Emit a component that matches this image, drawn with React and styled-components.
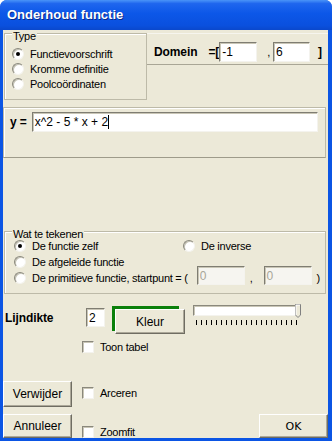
import styled, { createGlobalStyle } from "styled-components";

const GlobalStyle = createGlobalStyle`
  html, body {
    margin: 0;
    padding: 0;
    background: #ffffff;
  }
  body {
    font-family: "Liberation Sans", Arial, sans-serif;
  }
`;

const App = () => {
  return (
    <>
      <GlobalStyle />
      <Window>
        <TitleBar>
          <Title>Onderhoud functie</Title>
        </TitleBar>

        <Client>
          <TopRow>
            <TypeGroup>
              <GroupTitle>Type</GroupTitle>
              <RadioRow>
                <Radio $checked />
                <span>Functievoorschrift</span>
              </RadioRow>
              <RadioRow>
                <Radio />
                <span>Kromme definitie</span>
              </RadioRow>
              <RadioRow>
                <Radio />
                <span>Poolcoördinaten</span>
              </RadioRow>
            </TypeGroup>

            <DomeinPanel>
              <BoldLabel>Domein</BoldLabel>
              <BoldLabel $gap={11}>=[</BoldLabel>
              <Field $width={38}>-1</Field>
              <Sep $left={10} $right={3}>,</Sep>
              <Field $width={37}>6</Field>
              <BoldLabel $gap={8}>]</BoldLabel>
            </DomeinPanel>
          </TopRow>

          <FormulaPanel>
            <BoldLabel>y =</BoldLabel>
            <Field $width={286} $gap={5}>
              x^2 - 5 * x + 2
              <Caret />
            </Field>
          </FormulaPanel>

          <DrawGroup>
            <GroupTitle>Wat te tekenen</GroupTitle>
            <DrawGrid>
              <RadioRow $tall>
                <Radio $checked />
                <span>De functie zelf</span>
              </RadioRow>
              <RadioRow $tall>
                <Radio />
                <span>De inverse</span>
              </RadioRow>
              <RadioRow $tall $wide>
                <Radio />
                <span>De afgeleide functie</span>
              </RadioRow>
              <RadioRow $tall $wide>
                <Radio />
                <span>De primitieve functie, startpunt = (</span>
                <Field $width={48} $gap={9} $disabled $lift>
                  0
                </Field>
                <Sep $left={5} $right={11}>,</Sep>
                <Field $width={48} $disabled $lift>
                  0
                </Field>
                <Sep $left={5}>)</Sep>
              </RadioRow>
            </DrawGrid>
          </DrawGroup>

          <LineRow>
            <LineLabel>Lijndikte</LineLabel>
            <SmallField>2</SmallField>
            <ColourFrame>
              <Button $width={70} $height={25}>
                Kleur
              </Button>
            </ColourFrame>
            <Slider>
              <SliderTrack>
                <SliderThumb viewBox="0 0 6 14">
                  <path d="M0.5 0.5 H5.5 V11 L3 13.5 L0.5 11 Z" fill="#ECE9D8" stroke="#808080" />
                  <path d="M1 1 H5 M1 1 V11" stroke="#ffffff" />
                </SliderThumb>
              </SliderTrack>
              <SliderTicks />
            </Slider>
          </LineRow>

          <CheckRow>
            <Check />
            <span>Toon tabel</span>
          </CheckRow>

          <ButtonRow $top={28}>
            <Button $width={69} $height={26}>
              Verwijder
            </Button>
            <CheckRow $inline $top={5}>
              <Check />
              <span>Arceren</span>
            </CheckRow>
          </ButtonRow>

          <ButtonRow $top={7}>
            <Button $width={69} $height={24}>
              Annuleer
            </Button>
            <CheckRow $inline $top={11}>
              <Check />
              <span>Zoomfit</span>
            </CheckRow>
            <OkButton $width={69} $height={24}>
              OK
            </OkButton>
          </ButtonRow>
        </Client>
      </Window>
    </>
  );
};

export default App;

const Window = styled.div`
  width: 332px;
  height: 441px;
  box-sizing: border-box;
  display: flex;
  flex-direction: column;
  background: #0b55e4;
  border-radius: 7px 7px 0 0;
  overflow: hidden;
`;

const TitleBar = styled.div`
  height: 30px;
  flex: none;
  display: flex;
  align-items: center;
  padding-left: 7px;
  background: linear-gradient(
    180deg,
    #4a94f8 0%,
    #1f66ee 12%,
    #0c57e8 45%,
    #0a50de 85%,
    #0a48cc 100%
  );
`;

const Title = styled.span`
  color: #ffffff;
  font-family: "Liberation Sans", Arial, sans-serif;
  font-weight: bold;
  font-size: 13px;
  text-shadow: 1px 1px 0 #0a2a8a;
  padding-bottom: 1px;
`;

const Client = styled.div`
  flex: 1;
  margin: 0 4px 3px 3px;
  background: #ece9d8;
  display: flex;
  flex-direction: column;
  font-size: 11px;
  letter-spacing: -0.25px;
  color: #000000;
  overflow: hidden;
`;

const TopRow = styled.div`
  display: flex;
  align-items: flex-start;
  margin-top: 3px;
`;

const GroupBox = styled.div`
  position: relative;
  box-sizing: border-box;
  border: 1px solid #bdbaa8;
  box-shadow: inset 1px 1px 0 #ffffff;
`;

const GroupTitle = styled.span`
  position: absolute;
  top: -3px;
  left: 7px;
  padding: 0 1px;
  line-height: 11px;
  background: #ece9d8;
`;

const TypeGroup = styled(GroupBox)`
  margin-left: 1px;
  width: 143px;
  height: 67px;
  padding: 12px 0 0 7px;
`;

const RadioRow = styled.div`
  display: flex;
  align-items: center;
  height: ${(p) => (p.$tall ? 16 : 15)}px;
  grid-column: ${(p) => (p.$wide ? "1 / 3" : "auto")};
  white-space: nowrap;
`;

const Radio = styled.span`
  position: relative;
  flex: none;
  width: 12px;
  height: 12px;
  box-sizing: border-box;
  margin-right: 6px;
  border-radius: 50%;
  background: #ffffff;
  border: 1px solid;
  border-color: #8a887c #f4f3ee #f4f3ee #8a887c;
  box-shadow: inset 1px 1px 0 #c4c2b4;

  &::after {
    content: "";
    display: ${(p) => (p.$checked ? "block" : "none")};
    position: absolute;
    left: 3px;
    top: 3px;
    width: 4px;
    height: 4px;
    border-radius: 50%;
    background: #000000;
  }
`;

const DomeinPanel = styled.div`
  flex: 1;
  height: 32px;
  box-sizing: border-box;
  display: flex;
  align-items: flex-start;
  padding: 8px 0 0 7px;
  border-top: 1px solid #f6f5ee;
  border-bottom: 1px solid #a9a696;
`;

const BoldLabel = styled.span`
  font-size: 12px;
  font-weight: bold;
  letter-spacing: -0.1px;
  line-height: 20px;
  margin-left: ${(p) => p.$gap || 0}px;
  white-space: nowrap;
`;

const Sep = styled.span`
  line-height: 20px;
  margin-left: ${(p) => p.$left || 0}px;
  margin-right: ${(p) => p.$right || 0}px;
`;

const Field = styled.div`
  flex: none;
  position: relative;
  display: flex;
  align-items: center;
  box-sizing: border-box;
  width: ${(p) => p.$width}px;
  height: ${(p) => (p.$lift ? 19 : 20)}px;
  margin-left: ${(p) => p.$gap || 0}px;
  margin-bottom: ${(p) => (p.$lift ? 5 : 0)}px;
  padding-left: 2px;
  background: ${(p) => (p.$disabled ? "#f6f5f0" : "#ffffff")};
  color: ${(p) => (p.$disabled ? "#a8a698" : "#000000")};
  border: 1px solid;
  border-color: #7f7d72 #f4f3ee #f4f3ee #7f7d72;
  box-shadow: inset 1px 1px 0 #c9c6b6;
  font-size: 12px;
  letter-spacing: 0;
  white-space: pre;
`;

const Caret = styled.span`
  display: inline-block;
  width: 1px;
  height: 14px;
  background: #000000;
`;

const FormulaPanel = styled(GroupBox)`
  display: flex;
  align-items: flex-start;
  margin: 7px 2px 0 0;
  height: 51px;
  padding: 4px 0 0 6px;
  border-color: #bdbaa8 #bdbaa8 #9e9b8a #bdbaa8;
`;

const DrawGroup = styled(GroupBox)`
  margin: 73px 2px 0 1px;
  height: 63px;
  padding: 6px 0 0 9px;
`;

const DrawGrid = styled.div`
  display: grid;
  grid-template-columns: 169px 1fr;
`;

const LineRow = styled.div`
  display: flex;
  align-items: flex-start;
  margin-top: 10px;
  height: 31px;
`;

const LineLabel = styled.span`
  width: 81px;
  margin: 4px 0 0 2px;
  font-size: 12px;
  font-weight: bold;
  letter-spacing: -0.1px;
  line-height: 20px;
`;

const SmallField = styled(Field).attrs({ $width: 19 })`
  height: 19px;
  margin-top: 4px;
`;

const ColourFrame = styled.div`
  width: 64px;
  height: 22px;
  margin: 2px 0 0 7px;
  border-top: 3px solid #0b800b;
  border-left: 3px solid #0b800b;
`;

const Button = styled.div`
  flex: none;
  box-sizing: border-box;
  display: flex;
  align-items: center;
  justify-content: center;
  width: ${(p) => p.$width}px;
  height: ${(p) => p.$height}px;
  background: #ece9d8;
  border: 1px solid;
  border-color: #ffffff #6f6d62 #6f6d62 #ffffff;
  box-shadow: inset -1px -1px 0 #aca899;
  font-size: 12px;
  letter-spacing: 0;
`;

const OkButton = styled(Button)`
  margin-left: auto;
  font-family: "DejaVu Sans", sans-serif;
  font-size: 11px;
`;

const Slider = styled.div`
  margin-left: 14px;
  width: 108px;
`;

const SliderTrack = styled.div`
  position: relative;
  box-sizing: border-box;
  height: 11px;
  margin-top: 1px;
  background: #ffffff;
  border: 1px solid;
  border-color: #8a887c #f4f3ee #f4f3ee #8a887c;
  box-shadow: inset 1px 1px 0 #c9c6b6;
`;

const SliderThumb = styled.svg`
  position: absolute;
  right: -1px;
  top: -2px;
  width: 6px;
  height: 14px;
`;

const SliderTicks = styled.div`
  height: 5px;
  margin: 4px 0 0 3px;
  width: 101px;
  background: repeating-linear-gradient(
    90deg,
    #000000 0 1px,
    transparent 1px 5px
  );
`;

const CheckRow = styled.div`
  display: flex;
  align-items: center;
  height: 13px;
  margin-top: ${(p) => (p.$top !== undefined ? p.$top : 5)}px;
  padding-left: ${(p) => (p.$inline ? 10 : 79)}px;
  align-self: flex-start;
  white-space: nowrap;
`;

const Check = styled.span`
  flex: none;
  width: 12px;
  height: 12px;
  box-sizing: border-box;
  margin-right: 6px;
  background: #ffffff;
  border: 1px solid;
  border-color: #8a887c #f4f3ee #f4f3ee #8a887c;
  box-shadow: inset 1px 1px 0 #c9c6b6;
`;

const ButtonRow = styled.div`
  display: flex;
  align-items: flex-start;
  margin-top: ${(p) => p.$top}px;
`;
